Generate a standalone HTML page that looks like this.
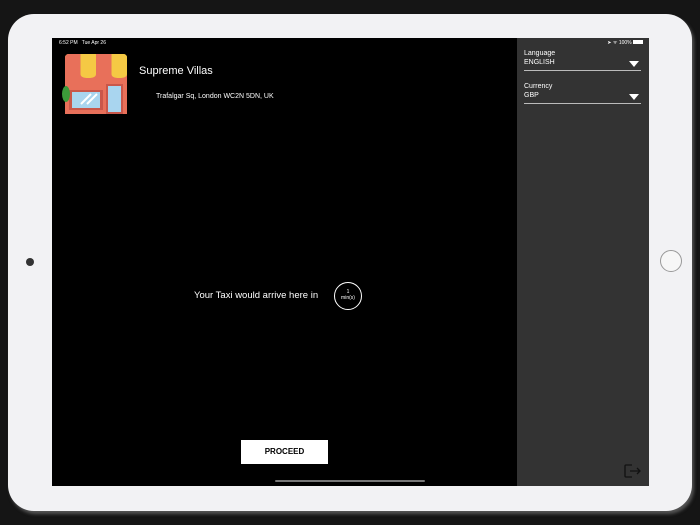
<!DOCTYPE html>
<html><head><style>
body{margin:0;width:700px;height:525px;background:#151515;position:relative;overflow:hidden;font-family:"Liberation Sans",sans-serif}
.dev{position:absolute;left:8px;top:14px;width:684px;height:497px;background:#f2f2f4;border-radius:26px;box-shadow:2px 3px 3px #555}
.scr{position:absolute;left:52px;top:38px;width:597px;height:448px;background:#000;overflow:hidden}
.side{position:absolute;left:465px;top:0;width:132px;height:448px;background:#333}
.t{position:absolute;color:#fff;white-space:nowrap}
.line{position:absolute;left:7px;width:117px;height:1px;background:#bbb}
.tri{position:absolute;width:0;height:0;border-left:5px solid transparent;border-right:5px solid transparent;border-top:6px solid #fff}
</style></head><body>
<div class="dev"></div>
<div style="position:absolute;left:26px;top:258px;width:8px;height:8px;border-radius:50%;background:#333"></div>
<div style="position:absolute;left:660px;top:250px;width:22px;height:22px;border-radius:50%;border:1px solid #999;box-sizing:border-box;background:#f7f7f7"></div>
<div class="scr">
<div class="t" style="left:7px;top:2px;font-size:5px">6:52 PM&nbsp;&nbsp; Tue Apr 26</div>
<svg style="position:absolute;left:9px;top:14px" width="70" height="64" viewBox="0 0 70 64">
<rect x="4" y="18" width="62" height="44" fill="#e8705a"/>
<rect x="8" y="38" width="34" height="20" fill="#c9574a"/>
<rect x="11" y="40" width="28" height="16" fill="#a9d5ef"/>
<path d="M20 52 L30 42 M26 52 L36 42" stroke="#fff" stroke-width="2"/>
<rect x="45" y="32" width="17" height="30" fill="#c9574a"/>
<rect x="47" y="34" width="13" height="26" fill="#a9d5ef"/>
<path d="M4 6 Q4 2 8 2 H62 Q66 2 66 6 V18 H4Z" fill="#f5c944"/>
<path d="M4 6 Q4 2 8 2 H19.5 V22 Q19.5 26 11.75 26 Q4 26 4 22Z" fill="#e8705a"/>
<path d="M19.5 2 H35 V22 Q35 26 27.25 26 Q19.5 26 19.5 22Z" fill="#f5c944"/>
<path d="M35 2 H50.5 V22 Q50.5 26 42.75 26 Q35 26 35 22Z" fill="#e8705a"/>
<path d="M50.5 2 H62 Q66 2 66 6 V22 Q66 26 58.25 26 Q50.5 26 50.5 22Z" fill="#f5c944"/>
<ellipse cx="5" cy="42" rx="4" ry="8" fill="#3c9a3a"/>
</svg>
<div class="t" style="left:87px;top:27px;font-size:11px;font-weight:500">Supreme Villas</div>
<div class="t" style="left:104px;top:55px;font-size:7px">Trafalgar Sq, London WC2N 5DN, UK</div>
<div class="t" style="left:142px;top:252px;font-size:9.5px">Your Taxi would arrive here in</div>
<div style="position:absolute;left:282px;top:244px;width:26px;height:26px;border-radius:50%;border:1px solid #fff"></div>
<div class="t" style="left:282px;top:251px;width:28px;text-align:center;font-size:5px;line-height:6px">1<br>min(s)</div>
<div style="position:absolute;left:189px;top:402px;width:87px;height:24px;background:#fff;font-size:8px;font-weight:bold;text-align:center;line-height:24px">PROCEED</div>
<div style="position:absolute;left:223px;top:442px;width:150px;height:2px;background:#777;border-radius:1px"></div>
<div class="side">
<div class="t" style="right:6px;top:2px;font-size:5px">➤ ᯤ 100% <span style="display:inline-block;width:10px;height:4px;background:#fff"></span></div>
<div class="t" style="left:7px;top:12px;font-size:7px">Language</div>
<div class="t" style="left:7px;top:21px;font-size:7px">ENGLISH</div>
<div class="tri" style="left:112px;top:23px"></div>
<div class="line" style="top:32px"></div>
<div class="t" style="left:7px;top:45px;font-size:7px">Currency</div>
<div class="t" style="left:7px;top:54px;font-size:7px">GBP</div>
<div class="tri" style="left:112px;top:56px"></div>
<div class="line" style="top:65px"></div>
<svg style="position:absolute;left:106px;top:425px" width="20" height="16" viewBox="0 0 20 16"><path d="M9 2H3Q2 2 2 3V13Q2 14 3 14H9M7 8H17M14 5L17 8L14 11" fill="none" stroke="#111" stroke-width="1.3"/></svg>
</div>
</div>
</body></html>
